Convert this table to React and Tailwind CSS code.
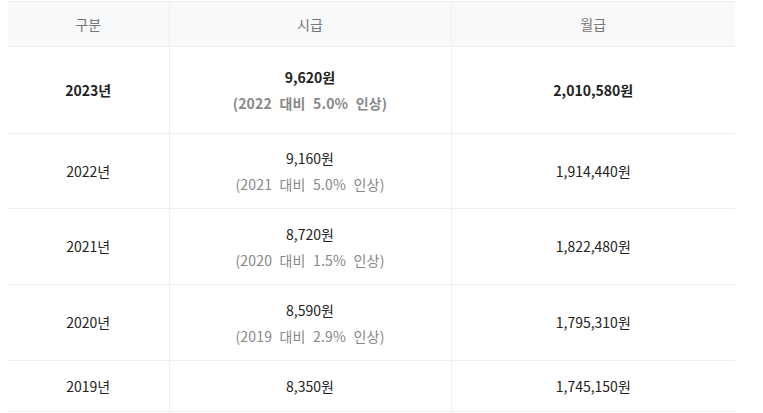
const rows = [
  { year: "2023년", hourly: "9,620원", note: "(2022 대비 5.0% 인상)", monthly: "2,010,580원", bold: true, h: "h-[87px]" },
  { year: "2022년", hourly: "9,160원", note: "(2021 대비 5.0% 인상)", monthly: "1,914,440원", h: "h-[75px]" },
  { year: "2021년", hourly: "8,720원", note: "(2020 대비 1.5% 인상)", monthly: "1,822,480원", h: "h-[76px]" },
  { year: "2020년", hourly: "8,590원", note: "(2019 대비 2.9% 인상)", monthly: "1,795,310원", h: "h-[76px]" },
  { year: "2019년", hourly: "8,350원", monthly: "1,745,150원", h: "h-[51px]" },
];

export default function App() {
  return (
    <div className="w-[763px] h-[413px] bg-white pt-px pl-2 font-['Noto_Sans_CJK_KR','Noto_Sans',sans-serif] text-[14px] text-[#222]">
      <table className="w-[727px] border-collapse table-fixed">
        <colgroup>
          <col className="w-[161px]" />
          <col className="w-[282px]" />
          <col className="w-[284px]" />
        </colgroup>
        <thead>
          <tr className="h-[45px] bg-[#f8f9fa] text-[#777]">
            <th className="font-normal border-t border-b border-[#eeeeee]">구분</th>
            <th className="font-normal border-t border-b border-l border-[#eeeeee]">시급</th>
            <th className="font-normal border-t border-b border-l border-[#eeeeee]">월급</th>
          </tr>
        </thead>
        <tbody>
          {rows.map((r) => (
            <tr key={r.year} className={`${r.h} ${r.bold ? "font-bold" : ""}`}>
              <td className="text-center border-b border-[#eeeeee]">{r.year}</td>
              <td className="text-center border-b border-l border-[#eeeeee] leading-[26px]">
                <div>{r.hourly}</div>
                {r.note && <div className="text-[#888] [word-spacing:4px] tracking-[0.2px]">{r.note}</div>}
              </td>
              <td className="text-center border-b border-l border-[#eeeeee]">{r.monthly}</td>
            </tr>
          ))}
        </tbody>
      </table>
    </div>
  );
}
